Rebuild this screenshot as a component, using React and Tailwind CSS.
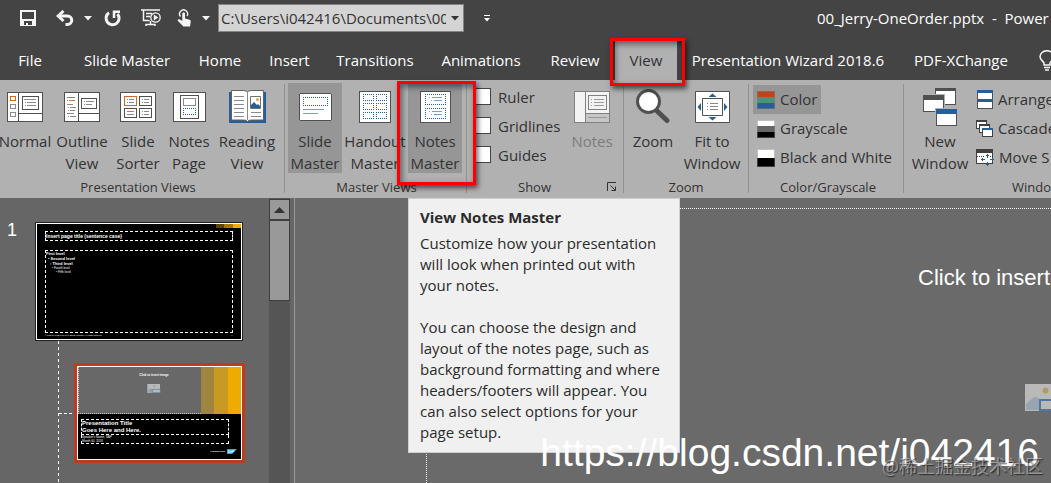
import React from "react";

function SaveIcon() {
  return (
    <svg width="16" height="16" viewBox="0 0 16 16" aria-hidden="true">
      <path fill="#f5f5f5" fillRule="evenodd" d="M0 0h16v16H0zM2 2v7h12V2zM4 11v4h2v-2h2v2h4v-4z" />
    </svg>
  );
}

function UndoIcon() {
  return (
    <svg width="18" height="16" viewBox="0 0 18 16" fill="none" stroke="#f5f5f5" aria-hidden="true">
      <path strokeWidth="3" d="M3 6h8.500a4.200 4.200 0 0 1 0 8.500H9.500" />
      <path strokeWidth="3" d="M7.500 1L2.200 6l5.300 5" />
    </svg>
  );
}

function RedoIcon() {
  return (
    <svg width="17" height="17" viewBox="0 0 17 17" fill="none" stroke="#f5f5f5" aria-hidden="true">
      <path strokeWidth="3" d="M5 2.800A6.500 6.500 0 1 0 13.500 4" />
      <path strokeWidth="2.500" d="M10 8V1.800h6" />
    </svg>
  );
}

function PresentIcon() {
  return (
    <svg width="20" height="18" viewBox="0 0 20 18" fill="none" stroke="#f5f5f5" aria-hidden="true">
      <path strokeWidth="1.500" d="M0 1h19M2.500 1v10.500h6M5 4.500h6M5 7.500h4M9.500 12v3M5 17v-1.500h9V17" />
      <circle cx="14.500" cy="8.500" r="4.700" strokeWidth="1.300" fill="#444" />
      <path fill="#f5f5f5" stroke="none" d="M12.800 5.600l4.500 2.900-4.500 2.900z" />
    </svg>
  );
}

function TouchIcon() {
  return (
    <svg width="15" height="18" viewBox="0 0 15 18" aria-hidden="true">
      <path fill="none" stroke="#f5f5f5" strokeWidth="1.400" d="M3.500 7.500A4 4 0 1 1 10 7" />
      <path fill="#f5f5f5" d="M5.300 4.500c0-1.500 2.700-1.500 2.700 0v5l4.500 1.300c1 .3 1.300 1 1.200 2L13 17.500H6.500L1 12c-1-1.300.6-2.400 1.800-1.500L5.300 12z" />
    </svg>
  );
}

function Caret({ fill = "#f5f5f5" }) {
  return (
    <svg width="8" height="5" viewBox="0 0 8 5" aria-hidden="true">
      <path fill={fill} d="M0 0h8L4 4.500z" />
    </svg>
  );
}

function CustomizeIcon() {
  return (
    <svg width="6" height="7" viewBox="0 0 6 7" aria-hidden="true">
      <path fill="#fff" d="M0 0h6v1H0zM0 3h6L3 6.500z" />
    </svg>
  );
}

function BulbIcon() {
  return (
    <svg className="shrink-0" width="16" height="21" viewBox="0 0 16 21" fill="none" stroke="#f5f5f5" strokeWidth="1.500" aria-hidden="true">
      <path d="M5 15v-2C4 11 1 9.500 1 6.800a6.800 6 0 0 1 13.800 0C14.800 9.500 12 11 11 13v2zM5 17.500h6M6 20h4" />
    </svg>
  );
}

function Icon({ w, h, children }) {
  return (
    <svg width={w} height={h} viewBox={`0 0 ${w} ${h}`} fill="none" shapeRendering="crispEdges" aria-hidden="true">
      {children}
    </svg>
  );
}

const NormalIcon = () => (
  <Icon w={36} h={30}>
    <path fill="#fff" stroke="#505050" d="M.5.500h35v29H.5z" />
    <path stroke="#505050" d="M11.500 0v30M11 21.500h24" />
    <path stroke="#cb6b26" d="M3.500 4.500h5v4h-5z" />
    <path stroke="#8a8a8a" d="M3.500 12.500h5v4h-5zM3.500 20.500h5v4h-5z" />
    <path stroke="#505050" d="M15.500 4.500h16v13h-16z" />
    <path stroke="#8a8a8a" d="M17 7.500h12M18 10.500h1M20 10.500h9M18 13.500h1M20 13.500h9" />
  </Icon>
);

const OutlineIcon = () => (
  <Icon w={36} h={30}>
    <path fill="#fff" stroke="#505050" d="M.5.500h35v29H.5z" />
    <path stroke="#505050" d="M14.500 0v30M15 21.500h20M17.500 6.500h15v10h-15z" />
    <path stroke="#cb6b26" d="M3 5.500h8" />
    <path stroke="#8a8a8a" d="M3 8.500h1M5 8.500h6M3 12.500h6M4 15.500h1M6 15.500h6M4 18.500h1M6 18.500h5M3 21.500h7M4 24.500h1M6 24.500h6M20 9.500h1M22 9.500h8M20 12.500h1M22 12.500h6" />
  </Icon>
);

const SorterIcon = () => (
  <Icon w={36} h={30}>
    <path fill="#fff" stroke="#505050" d="M.5.500h35v29H.5z" />
    <path stroke="#cb6b26" d="M4.500 4.500h12v9h-12z" />
    <path stroke="#505050" d="M19.500 4.500h12v9h-12zM4.500 16.500h12v9h-12zM19.500 16.500h12v9h-12z" />
    <path stroke="#8a8a8a" d="M7 7.500h1M9 7.500h5M7 10.500h1M9 10.500h5M22 7.500h1M24 7.500h5M22 10.500h1M24 10.500h5M7 19.500h7M7 22.500h7M22 19.500h1M24 19.500h5M22 22.500h1M24 22.500h5" />
  </Icon>
);

const NotesPageIcon = () => (
  <Icon w={33} h={30}>
    <path fill="#fff" stroke="#505050" d="M.5.500h32v29H.5z" />
    <path stroke="#505050" d="M7.500 3.500h18v23h-18z" />
    <path stroke="#8a8a8a" d="M10.500 6.500h12v7h-12z" />
    <path stroke="#275e98" strokeDasharray="1 1" d="M10 16.500h13M10 22.500h13M10.500 16v7M22.500 16v7" />
  </Icon>
);

const ReadingIcon = () => (
  <svg width="37" height="33" viewBox="0 0 37 33" fill="none" aria-hidden="true">
    <path fill="#275e98" d="M0 2h37v31H0z" />
    <path fill="#fff" stroke="#606060" d="M2.500.500h12q3 0 4 1.500 1-1.500 4-1.500h12v29.500h-12q-3 0-4 1.500-1-1.500-4-1.500h-12z" />
    <path stroke="#8a8a8a" d="M18.500 2v28M5 6.500h10M5 10.500h10M5 14.500h10M5 18.500h10M5 22.500h10M5 26.500h10M22 22.500h10M22 26.500h10" />
    <path stroke="#707070" d="M21.500 6.500h10v12h-10z" />
    <circle cx="28.500" cy="9.500" r="1.500" fill="#e4a33b" />
    <path fill="#275e98" d="M22 18v-3l3-3 3 3 1-1 2 2v2z" />
  </svg>
);

const SlideMasterIcon = () => (
  <Icon w={33} h={28}>
    <rect x="0.500" y="0.500" width="32" height="27" rx="2" fill="#fff" stroke="#505050" />
    <path stroke="#275e98" strokeDasharray="1 1" d="M4 4.500h25M4 12.500h25M4.500 4v9M28.500 4v9" />
    <path stroke="#7d9dc3" d="M4 16.500h21M4 20.500h15" />
  </Icon>
);

const HandoutIcon = () => (
  <Icon w={32} h={32}>
    <path fill="#fff" stroke="#505050" d="M.5.500h31v31H.5z" />
    <path
      stroke="#275e98"
      strokeDasharray="1 1"
      d="M4 3.500h11M4 9.500h11M4 12.500h11M4 18.500h11M4 21.500h11M4 27.500h11M4.500 3v7M14.500 3v7M4.500 12v7M14.500 12v7M4.500 21v7M14.500 21v7M17 3.500h11M17 9.500h11M17 12.500h11M17 18.500h11M17 21.500h11M17 27.500h11M17.500 3v7M27.500 3v7M17.500 12v7M27.500 12v7M17.500 21v7M27.500 21v7"
    />
  </Icon>
);

const NotesMasterIcon = () => (
  <Icon w={31} h={32}>
    <path fill="#fff" stroke="#505050" d="M.5.500h30v31H.5z" />
    <path
      stroke="#275e98"
      strokeDasharray="1 1"
      d="M5 3.500h21M5 13.500h21M5 17.500h21M5 27.500h21M5.500 3v11M25.500 3v11M5.500 17v11M25.500 17v11"
    />
    <path stroke="#7d9dc3" d="M9 6.500h1M12 6.500h10M11 9.500h1M14 9.500h8M9 20.500h1M12 20.500h10M11 23.500h1M14 23.500h8" />
  </Icon>
);

const NotesIcon = () => (
  <Icon w={36} h={32}>
    <path fill="#f3f3f3" stroke="#808080" d="M.5.500h35v31H.5z" />
    <path fill="#c6c6c6" d="M12 22h23v9H12z" />
    <path stroke="#808080" d="M11.500 0v32M12 22.500h23M14.500 4.500h18v14h-18z" />
    <path stroke="#999" d="M17 8.500h1M20 8.500h10M17 11.500h1M20 11.500h10M17 14.500h1M20 14.500h10M14 26.500h19" />
  </Icon>
);

const ZoomIcon = () => (
  <svg width="34" height="35" viewBox="0 0 34 35" aria-hidden="true">
    <path stroke="#505050" strokeWidth="5" strokeLinecap="round" d="M20 21l11 10.500" />
    <circle cx="12.500" cy="12.500" r="11" fill="#fff" stroke="#505050" strokeWidth="3" />
  </svg>
);

const FitIcon = () => (
  <svg width="35" height="32" viewBox="0 0 35 32" fill="none" aria-hidden="true">
    <path fill="#fff" stroke="#505050" d="M.5.500h34v31H.5z" />
    <path stroke="#505050" d="M7.500 7.500h20v17h-20z" />
    <path stroke="#8a8a8a" d="M12 12.500h1M15 12.500h8M12 15.500h1M15 15.500h8M12 18.500h1M15 18.500h8" />
    <path fill="#275e98" d="M13.500 6l4-3.500 4 3.500zM13.500 26l4 3.500 4-3.500zM6 12v8l-3.500-4zM29 12v8l3.500-4z" />
  </svg>
);

function Swatch({ colors }) {
  const size = 18 / colors.length;
  return (
    <Icon w={18} h={18}>
      {colors.map((c, i) => (
        <rect key={c} x="0" y={i * size} width="18" height={size} fill={c} />
      ))}
      <path stroke="#808080" strokeOpacity="0.500" d="M.5.500h17v17H.5z" />
    </Icon>
  );
}

const NewWindowIcon = () => (
  <Icon w={34} h={38}>
    <path fill="#fff" stroke="#505050" d="M12.500.500h20v16h-20z" />
    <path fill="#505050" d="M12 0h21v3H12z" />
    <path fill="#b1b1b1" d="M-1 6h23v19H-1z" />
    <path fill="#fff" stroke="#505050" d="M.5 7.500h20v16H.5z" />
    <path fill="#505050" d="M0 7h21v5H0z" />
    <path fill="#b1b1b1" d="M12 20h22v18H12z" />
    <path fill="#fff" stroke="#505050" d="M13.500 21.500h20v16h-20z" />
    <path fill="#275e98" d="M13 21h21v5H13z" />
  </Icon>
);

const ArrangeIcon = () => (
  <Icon w={17} h={20}>
    <path fill="#fff" stroke="#505050" d="M1.500.500h15v9h-15zM1.500 9.500h15v9h-15z" />
    <path fill="#275e98" d="M1 0h16v3H1zM1 9h16v3H1z" />
  </Icon>
);

const CascadeIcon = () => (
  <Icon w={17} h={18}>
    <path fill="#fff" stroke="#404040" d="M.5.500h10v8H.5z" />
    <path fill="#404040" d="M0 0h11v2H0z" />
    <path fill="#fff" stroke="#404040" d="M3.500 4.500h10v8h-10z" />
    <path fill="#404040" d="M3 4h11v2H3z" />
    <path fill="#fff" stroke="#404040" d="M6.500 8.500h10v8h-10z" />
    <path fill="#275e98" d="M6 8h11v2H6z" />
  </Icon>
);

const MoveSplitIcon = () => (
  <Icon w={18} h={18}>
    <path fill="#fff" stroke="#404040" d="M.5.500h16v14H.5z" />
    <path fill="#404040" d="M0 0h17v4H0z" />
    <path stroke="#404040" strokeDasharray="1 1" d="M1 7.500h8M14 7.500h3" />
    <path stroke="#275e98" d="M11.500 5v4M11.500 13v4M5 10.500h4M14 10.500h4M10 6.500h3M10 15.500h3M6.500 9v3M16.500 9v3" />
  </Icon>
);

const LauncherIcon = () => (
  <svg width="10" height="10" viewBox="0 0 10 10" fill="none" stroke="#333" aria-hidden="true">
    <path d="M.5 9V.5H9M3.500 3.500l5 5M8.500 4.500v4h-4" />
  </svg>
);

function PictureIcon({ className }) {
  return (
    <svg className={className} viewBox="0 0 40 30" fill="none" aria-hidden="true">
      <path fill="#b9b9b9" d="M0 0h38v27H0z" />
      <circle cx="20.500" cy="6.500" r="3" fill="#b39a66" />
      <path fill="#98a4b1" d="M1 26v-6l8-7h3l6 6v7z" />
      <path fill="#b9b9b9" stroke="#50789f" strokeWidth="2" d="M15 16h24v10H15z" />
      <path fill="#50789f" d="M18 30l3-2 3 2z" />
    </svg>
  );
}

const tabs = [
  { name: "File", width: "w-[60px]" },
  { name: "Slide Master", width: "w-[134px]" },
  { name: "Home", width: "w-[52px]" },
  { name: "Insert", width: "w-[87px]" },
  { name: "Transitions", width: "w-[84px]" },
  { name: "Animations", width: "w-[128px]" },
  { name: "Review", width: "w-[60px]" },
];

function Tab({ name, width }) {
  return (
    <button type="button" className={`h-10 shrink-0 text-center whitespace-nowrap ${width}`}>
      {name}
    </button>
  );
}

function TitleBar() {
  return (
    <div className="flex h-9 items-center pl-5">
      <button type="button" aria-label="Save"><SaveIcon /></button>
      <button type="button" aria-label="Undo" className="ml-5"><UndoIcon /></button>
      <button type="button" aria-label="Undo list" className="ml-2.5"><Caret /></button>
      <button type="button" aria-label="Repeat" className="ml-3"><RedoIcon /></button>
      <button type="button" aria-label="Start slide show" className="ml-5"><PresentIcon /></button>
      <button type="button" aria-label="Touch mode" className="ml-4"><TouchIcon /></button>
      <button type="button" aria-label="Touch mode list" className="ml-2.5"><Caret /></button>
      <div className="ml-2 flex h-7 w-[246px] shrink-0 items-center border border-[#858585] bg-[#d4d4d4]">
        <input
          aria-label="File location"
          defaultValue="C:\Users\i042416\Documents\00"
          className="h-6 w-[227px] min-w-0 bg-transparent pl-0.5 text-[15px] text-[#333] outline-none"
        />
        <button type="button" aria-label="Recent locations" className="flex h-6 flex-1 items-center justify-center">
          <Caret fill="#333" />
        </button>
      </div>
      <button type="button" aria-label="Customize toolbar" className="ml-5"><CustomizeIcon /></button>
      <h1 className="ml-auto w-[234px] shrink-0 overflow-hidden text-[15px] whitespace-pre">00_Jerry-OneOrder.pptx  -  Power</h1>
    </div>
  );
}

function RedFrame({ className }) {
  return (
    <span
      aria-hidden="true"
      className={`pointer-events-none absolute z-20 border-[3px] border-[#fe0000] shadow-[2px_3px_5px_rgba(0,0,0,0.6),inset_2px_3px_6px_rgba(0,0,0,0.5)] ${className}`}
    />
  );
}

function TabRow() {
  return (
    <nav className="flex h-10 items-center text-[15px]">
      {tabs.map((t) => (
        <Tab key={t.name} {...t} />
      ))}
      <div className="relative ml-2.5 shrink-0">
        <button type="button" className="h-10 w-[62px] bg-[#b1b1b1] text-[#333]">View</button>
        <RedFrame className="-top-0.5 -right-2 -bottom-1.5 -left-[5px]" />
      </div>
      <Tab name="Presentation Wizard 2018.6" width="w-[222px]" />
      <Tab name="PDF-XChange" width="w-[124px]" />
      <button type="button" aria-label="Tell me" className="ml-4 shrink-0"><BulbIcon /></button>
    </nav>
  );
}

function BigButton({ icon, lines, width, active, disabled }) {
  return (
    <button
      type="button"
      disabled={disabled}
      className={`flex h-[90px] shrink-0 flex-col items-center justify-start whitespace-nowrap ${width} ${active ? "bg-[#969696]" : ""} ${disabled ? "text-[#7c7c7c]" : ""}`}
    >
      <span className="flex h-[47px] shrink-0 items-center justify-center">{icon}</span>
      {lines.map((l) => (
        <span key={l} className="shrink-0 leading-[22px]">{l}</span>
      ))}
    </button>
  );
}

function Group({ label, width, children, launcher }) {
  return (
    <section aria-label={label} className={`flex h-[118px] flex-col pt-[3px] ${width}`}>
      <div className="flex h-[94px]">{children}</div>
      <div className="flex items-center justify-center text-[13px] leading-5">
        <span className="flex-1 text-center whitespace-nowrap">{label}</span>
        {launcher && (
          <button type="button" aria-label={`${label} settings`} className="mr-1.5 ml-3">
            <LauncherIcon />
          </button>
        )}
      </div>
    </section>
  );
}

const Divider = () => <div className="mt-1 h-[109px] w-px shrink-0 bg-[#929292]" />;

function Check({ label }) {
  return (
    <label className="flex h-[27px] items-center gap-[7px] leading-5">
      <input type="checkbox" className="h-[17px] w-[17px] appearance-none border border-[#444] bg-white" />
      {label}
    </label>
  );
}

function SmallButton({ icon, label, active }) {
  return (
    <button
      type="button"
      className={`flex h-[29px] items-center gap-[5px] self-start px-1 whitespace-nowrap ${active ? "bg-[#969696]" : ""}`}
    >
      {icon}
      {label}
    </button>
  );
}

function Tooltip() {
  return (
    <div
      role="tooltip"
      className="absolute top-[115px] left-0 z-10 w-[272px] border border-[#cfcfcf] bg-[#f0f0f0] px-[11px] pt-2 pb-[9px] text-[15px] text-[#2b2b2b]"
    >
      <p className="leading-5 font-bold">View Notes Master</p>
      <p className="mt-1.5 leading-[21px] whitespace-nowrap">
        Customize how your presentation<br />will look when printed out with<br />your notes.
      </p>
      <p className="mt-[21px] leading-[21px] whitespace-nowrap">
        You can choose the design and<br />layout of the notes page, such as<br />background formatting and where<br />
        headers/footers will appear. You<br />can also select options for your<br />page setup.
      </p>
    </div>
  );
}

function Ribbon() {
  return (
    <div className="flex h-[118px] bg-[#b1b1b1] text-[15px] text-[#333]">
      <Group label="Presentation Views" width="w-[284px] shrink-0 pr-2">
        <BigButton icon={<NormalIcon />} lines={["Normal"]} width="w-[50px]" />
        <BigButton icon={<OutlineIcon />} lines={["Outline", "View"]} width="w-16" />
        <BigButton icon={<SorterIcon />} lines={["Slide", "Sorter"]} width="w-[48px]" />
        <BigButton icon={<NotesPageIcon />} lines={["Notes", "Page"]} width="w-[54px]" />
        <BigButton icon={<ReadingIcon />} lines={["Reading", "View"]} width="w-[62px]" />
      </Group>
      <Divider />
      <Group label="Master Views" width="w-[181px] shrink-0 pr-px pl-[3px]">
        <BigButton icon={<SlideMasterIcon />} lines={["Slide", "Master"]} width="w-[54px]" active />
        <BigButton icon={<HandoutIcon />} lines={["Handout", "Master"]} width="w-[66px]" />
        <div className="relative">
          <BigButton icon={<NotesMasterIcon />} lines={["Notes", "Master"]} width="w-[54px]" active />
          <RedFrame className="-top-0.5 -right-3.5 -bottom-2 -left-[11px]" />
          <Tooltip />
        </div>
      </Group>
      <Divider />
      <Group label="Show" width="w-[156px] shrink-0 pl-[7px]" launcher>
        <div className="flex w-[93px] shrink-0 flex-col gap-0.5">
          <Check label="Ruler" />
          <Check label="Gridlines" />
          <Check label="Guides" />
        </div>
        <BigButton icon={<NotesIcon />} lines={["Notes"]} width="w-[50px]" disabled />
      </Group>
      <Divider />
      <Group label="Zoom" width="w-[124px] shrink-0">
        <BigButton icon={<ZoomIcon />} lines={["Zoom"]} width="w-[58px]" />
        <BigButton icon={<FitIcon />} lines={["Fit to", "Window"]} width="w-[60px]" />
      </Group>
      <Divider />
      <Group label="Color/Grayscale" width="w-[154px] shrink-0 pl-1">
        <div className="flex flex-col pt-0.5">
          <SmallButton icon={<Swatch colors={["#c0431f", "#4f9077", "#275e98"]} />} label="Color" active />
          <SmallButton icon={<Swatch colors={["#ffffff", "#666666", "#000000"]} />} label="Grayscale" />
          <SmallButton icon={<Swatch colors={["#ffffff", "#000000"]} />} label="Black and White" />
        </div>
      </Group>
      <Divider />
      <section aria-label="Window" className="flex h-[118px] min-w-0 flex-1 flex-col overflow-hidden pt-[3px]">
        <div className="flex h-[94px] pl-1.5">
          <BigButton icon={<NewWindowIcon />} lines={["New", "Window"]} width="w-[60px]" />
          <div className="flex flex-col pt-0.5 pl-0.5">
            <SmallButton icon={<ArrangeIcon />} label="Arrange" />
            <SmallButton icon={<CascadeIcon />} label="Cascade" />
            <SmallButton icon={<MoveSplitIcon />} label="Move S" />
          </div>
        </div>
        <span className="self-end text-[13px] leading-5">Windo</span>
      </section>
    </div>
  );
}

function MasterThumb() {
  return (
    <div className="h-[119px] w-[208px] border border-[#222] font-['Liberation_Sans',sans-serif] text-white">
      <div className="flex h-full flex-col border border-white bg-black px-2">
        <div className="-mr-2 flex h-1 self-end">
          <span className="w-2 bg-[#604500]" />
          <span className="w-[9px] bg-[#a87800]" />
          <span className="w-2 bg-[#f0ab00]" />
        </div>
        <p className="mt-[3px] h-2.5 border border-dashed border-white text-[5px] leading-[9px] font-bold">
          Insert page title (sentence case)
        </p>
        <div className="mt-[9px] h-[83px] border border-dashed border-white text-[4px] leading-[5px]">
          <p className="font-bold">First level</p>
          <p className="pl-0.5 font-bold">• Second level</p>
          <p className="pl-1 font-bold">▫ Third level</p>
          <p className="pl-1.5 text-[3px]">• Fourth level</p>
          <p className="pl-2.5 text-[3px] leading-[3px]">• Fifth level</p>
        </div>
        <div className="mt-px flex justify-between text-[2px] leading-[3px]">
          <span>© 2018 SAP SE or an SAP affiliate company. All rights reserved.</span>
          <span>‹#›</span>
        </div>
      </div>
    </div>
  );
}

function TitleThumb() {
  return (
    <div className="h-[100px] w-[171px] border-[3px] border-[#bd3c1d] font-['Liberation_Sans',sans-serif] text-white">
      <div className="flex h-full flex-col border border-white bg-black">
        <div className="flex h-[47px] bg-[#686868]">
          <div className="flex flex-1 flex-col items-center border-b border-l border-dotted border-[#ccc] pt-1.5 pl-7">
            <p className="text-[3px] leading-[5px] font-bold">Click to insert image</p>
            <PictureIcon className="mt-1.5 h-2.5 w-3.5" />
          </div>
          <span className="w-[13px] bg-[#a08540]" />
          <span className="w-3.5 bg-[#c89a23]" />
          <span className="w-[13px] bg-[#f0ab00]" />
        </div>
        <div className="mt-[5px] mr-3 ml-[3px] border border-dashed border-white text-[6px] leading-[7px] font-bold">
          <p>Presentation Title</p>
          <p>Goes Here and Here.</p>
        </div>
        <div className="mr-3 ml-[3px] border border-t-0 border-dashed border-white text-[3px] leading-[4px]">
          <p>Speaker&apos;s Name, SAP</p>
          <p>Month 00, 2018</p>
        </div>
        <div className="flex items-center justify-end gap-0.5 pt-[5px] pr-1">
          <span className="text-[2px] leading-[5px] font-bold">THE BEST RUN</span>
          <svg width="10" height="5" viewBox="0 0 20 10" aria-label="SAP" role="img">
            <path fill="#35a9e0" d="M0 0h20L10 10H0z" />
            <path fill="none" stroke="#fff" strokeWidth="1.200" d="M5 3H3v2h2v2H2M6 8l2-5 2 5M11 7V3h3v2h-3" />
          </svg>
        </div>
      </div>
    </div>
  );
}

function ThumbnailPane() {
  return (
    <aside className="flex w-[269px] shrink-0 flex-col bg-[#666] pt-6">
      <div className="flex">
        <span className="w-[35px] shrink-0 pl-[7px] font-['Liberation_Sans',sans-serif] text-lg leading-4 text-white">1</span>
        <MasterThumb />
      </div>
      <div className="ml-[58px] flex flex-1">
        <div className="w-px bg-[repeating-linear-gradient(to_bottom,#fff_0_3px,transparent_3px_6px)]" />
        <div className="flex items-center self-start pt-[22px]">
          <span className="h-px w-[15px] bg-[repeating-linear-gradient(to_right,#fff_0_3px,transparent_3px_5px)]" />
          <TitleThumb />
        </div>
      </div>
    </aside>
  );
}

function Scrollbar() {
  return (
    <div className="flex w-[21px] shrink-0 flex-col bg-[#555] pt-px">
      <button type="button" aria-label="Scroll up" className="flex h-[21px] items-center justify-center border border-[#3f3f3f] bg-[#999]">
        <svg width="11" height="6" viewBox="0 0 11 6" aria-hidden="true"><path fill="#333" d="M0 6h11L5.500 0z" /></svg>
      </button>
      <div className="h-[81px] border border-[#3f3f3f] bg-[#999]" />
    </div>
  );
}

export default function App() {
  return (
    <div className="relative flex min-h-screen flex-col overflow-hidden bg-[#444] font-['Open_Sans','Noto_Sans',sans-serif] text-white">
      <header>
        <TitleBar />
        <div className="pt-1">
          <TabRow />
        </div>
        <Ribbon />
      </header>
      <main className="flex flex-1 bg-[#666]">
        <ThumbnailPane />
        <Scrollbar />
        <div className="ml-1 flex min-w-0 flex-1 overflow-hidden border-l border-[#999] bg-[#6a6a6a] pt-2.5 pl-[131px]">
          <div className="flex flex-1 flex-col border-t border-l border-dotted border-white pt-14 pl-[491px] font-['Liberation_Sans',sans-serif]">
            <p className="text-[22px] leading-[26px] whitespace-nowrap">Click to insert</p>
            <PictureIcon className="mt-[93px] ml-[107px] h-[30px] w-10 shrink-0" />
          </div>
        </div>
      </main>
      <p className="pointer-events-none absolute right-3 bottom-2 z-30 font-['Liberation_Sans',sans-serif] text-[39px] leading-[44px] whitespace-nowrap">
        https://blog.csdn.net/i042416
      </p>
      <p className="pointer-events-none absolute right-2 bottom-1.5 z-30 font-['Noto_Sans_CJK_SC',sans-serif] text-lg leading-6 whitespace-nowrap text-white/40 [text-shadow:1px_1px_1px_rgba(0,0,0,0.6)]">
        @稀土掘金技术社区
      </p>
    </div>
  );
}
